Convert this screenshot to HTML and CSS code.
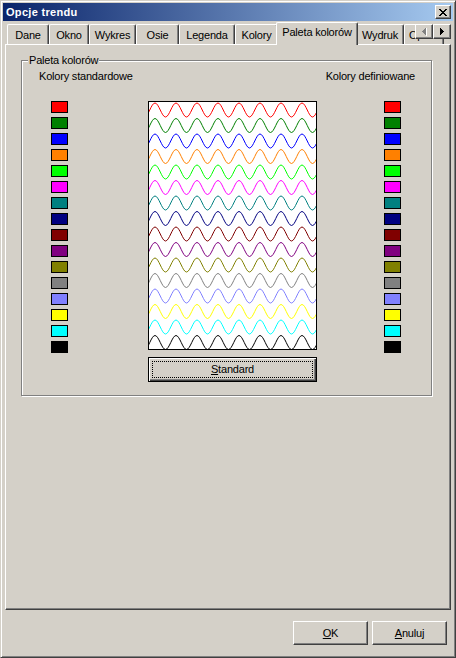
FILE: index.html
```html
<!DOCTYPE html>
<html lang="pl">
<head>
<meta charset="utf-8">
<title>Opcje trendu</title>
<link rel="stylesheet" href="styles.css">
</head>
<body>
<div class="window">
  <div class="titlebar">
    <span class="title">Opcje trendu</span>
    <button class="close" type="button" aria-label="Zamknij">
      <svg width="8" height="7" viewBox="0 0 8 7"><path d="M0 0h2v1h-2zM6 0h2v1h-2zM1 1h2v1h-2zM5 1h2v1h-2zM2 2h4v1h-4zM3 3h2v1h-2zM2 4h4v1h-4zM1 5h2v1h-2zM5 5h2v1h-2zM0 6h2v1h-2zM6 6h2v1h-2z" fill="#000"/></svg>
    </button>
  </div>

  <div class="tabctl">
    <div class="tabstrip">
      <div class="tab w-dane">Dane</div>
      <div class="tab w-okno">Okno</div>
      <div class="tab w-wykres">Wykres</div>
      <div class="tab w-osie">Osie</div>
      <div class="tab w-legenda">Legenda</div>
      <div class="tab w-kolory">Kolory</div>
      <div class="tab active w-paleta">Paleta kolorów</div>
      <div class="tab w-wydruk">Wydruk</div>
      <div class="tab partial">Opis</div>
    </div>
    <div class="spin">
      <button class="spinbtn" type="button" aria-label="W lewo">
        <svg width="5" height="8" viewBox="0 0 5 8"><path d="M4 0h1v8h-1zM3 1h1v6h-1zM2 2h1v4h-1zM1 3h1v2h-1z" fill="#fff"/><path d="M3 0h1v7h-1zM2 1h1v5h-1zM1 2h1v3h-1zM0 3h1v1h-1z" fill="#808080"/></svg>
      </button>
      <button class="spinbtn" type="button" aria-label="W prawo">
        <svg width="4" height="7" viewBox="0 0 4 7"><path d="M0 0h1v7h-1zM1 1h1v5h-1zM2 2h1v3h-1zM3 3h1v1h-1z" fill="#000"/></svg>
      </button>
    </div>

    <div class="panel">
      <div class="group">
        <span class="legend">Paleta kolorów</span>
        <div class="grp-head">
          <span>Kolory standardowe</span>
          <span>Kolory definiowane</span>
        </div>
        <div class="grp-body">
          <div class="swatches">
            <div class="sw c0"></div><div class="sw c1"></div><div class="sw c2"></div><div class="sw c3"></div>
            <div class="sw c4"></div><div class="sw c5"></div><div class="sw c6"></div><div class="sw c7"></div>
            <div class="sw c8"></div><div class="sw c9"></div><div class="sw c10"></div><div class="sw c11"></div>
            <div class="sw c12"></div><div class="sw c13"></div><div class="sw c14"></div><div class="sw c15"></div>
          </div>
          <div class="center">
            <div class="preview">
              <svg width="167" height="247" viewBox="0 0 167 247">
                <defs>
                  <path id="w" fill="none" stroke-width="1" d="M-4.5 14c3.816 0 6.684-14 10.5-14s6.684 14 10.5 14s6.684-14 10.5-14s6.684 14 10.5 14s6.684-14 10.5-14s6.684 14 10.5 14s6.684-14 10.5-14s6.684 14 10.5 14s6.684-14 10.5-14s6.684 14 10.5 14s6.684-14 10.5-14s6.684 14 10.5 14s6.684-14 10.5-14s6.684 14 10.5 14s6.684-14 10.5-14s6.684 14 10.5 14s6.684-14 10.5-14"/>
                </defs>
                <use href="#w" y="1" stroke="#FF0000"/>
                <use href="#w" y="16.5" stroke="#008000"/>
                <use href="#w" y="32" stroke="#0000FF"/>
                <use href="#w" y="47.5" stroke="#FF8000"/>
                <use href="#w" y="63" stroke="#00FF00"/>
                <use href="#w" y="78.5" stroke="#FF00FF"/>
                <use href="#w" y="94" stroke="#008080"/>
                <use href="#w" y="109.5" stroke="#000080"/>
                <use href="#w" y="125" stroke="#800000"/>
                <use href="#w" y="140.5" stroke="#800080"/>
                <use href="#w" y="156" stroke="#808000"/>
                <use href="#w" y="171.5" stroke="#808080"/>
                <use href="#w" y="187" stroke="#8080FF"/>
                <use href="#w" y="202.5" stroke="#FFFF00"/>
                <use href="#w" y="218" stroke="#00FFFF"/>
                <use href="#w" y="233.5" stroke="#000000"/>
              </svg>
            </div>
            <button class="btn default" type="button"><span class="focus"><u>S</u>tandard</span></button>
          </div>
          <div class="swatches right">
            <div class="sw c0"></div><div class="sw c1"></div><div class="sw c2"></div><div class="sw c3"></div>
            <div class="sw c4"></div><div class="sw c5"></div><div class="sw c6"></div><div class="sw c7"></div>
            <div class="sw c8"></div><div class="sw c9"></div><div class="sw c10"></div><div class="sw c11"></div>
            <div class="sw c12"></div><div class="sw c13"></div><div class="sw c14"></div><div class="sw c15"></div>
          </div>
        </div>
      </div>
    </div>
  </div>

  <div class="footer">
    <button class="btn" type="button"><u>O</u>K</button>
    <button class="btn" type="button"><u>A</u>nuluj</button>
  </div>
</div>
</body>
</html>
```

FILE: styles.css
```css
* {
  box-sizing: border-box;
}

html,
body {
  margin: 0;
  padding: 0;
}

body {
  width: 456px;
  height: 658px;
  overflow: hidden;
  background: #D4D0C8;
  font-family: "Liberation Sans", Arial, sans-serif;
  font-size: 11px;
  letter-spacing: -0.2px;
  color: #000;
}

button {
  font: inherit;
  letter-spacing: inherit;
  color: inherit;
  margin: 0;
  padding: 0;
  cursor: default;
}

.window {
  width: 456px;
  height: 658px;
  display: flex;
  flex-direction: column;
  background: #D4D0C8;
  border: 1px solid;
  border-color: #D4D0C8 #404040 #404040 #D4D0C8;
  box-shadow: inset 1px 1px #fff, inset -1px -1px #808080;
  padding: 2px;
}

/* ---------- title bar ---------- */
.titlebar {
  flex: none;
  height: 18px;
  display: flex;
  align-items: center;
  justify-content: space-between;
  padding: 0 2px 0 3px;
  background: linear-gradient(to right, #0A246A, #A6CAF0);
}

.title {
  color: #fff;
  font-weight: bold;
  letter-spacing: 0.3px;
  line-height: 13px;
}

.close {
  width: 16px;
  height: 14px;
  display: flex;
  align-items: center;
  justify-content: center;
  background: #D4D0C8;
  border: 1px solid;
  border-color: #fff #404040 #404040 #fff;
  box-shadow: inset -1px -1px #808080;
}

.close svg {
  display: block;
}

/* ---------- tab control ---------- */
.tabctl {
  flex: 1;
  display: flex;
  flex-direction: column;
  margin: 1px 2px 0 2px;
  position: relative;
}

.tabstrip {
  flex: none;
  height: 22px;
  display: flex;
  align-items: flex-end;
  padding-left: 2px;
  position: relative;
  z-index: 1;
}

.tab {
  flex: none;
  height: 20px;
  padding-top: 4px;
  line-height: 13px;
  text-align: center;
  white-space: nowrap;
  overflow: hidden;
  background: #D4D0C8;
  border-top: 1px solid #fff;
  border-left: 1px solid #fff;
  border-right: 1px solid #404040;
  border-radius: 2px 2px 0 0;
  box-shadow: inset -1px 0 #808080;
}

.w-dane { width: 42px; }
.w-okno { width: 40px; }
.w-wykres { width: 47px; }
.w-osie { width: 43px; }
.w-legenda { width: 56px; }
.w-kolory { width: 43px; }
.w-paleta { width: 82px; }
.w-wydruk { width: 48px; }

.tab.active {
  height: 23px;
  margin: 0 -2px -1px -2px;
  padding-top: 3px;
  position: relative;
  z-index: 2;
}

.tab.partial {
  width: 40px;
  text-align: left;
  padding-left: 4px;
}

.spin {
  position: absolute;
  top: 2px;
  right: 0;
  z-index: 3;
  display: flex;
}

.spinbtn {
  width: 18px;
  height: 15px;
  display: flex;
  align-items: center;
  justify-content: center;
  background: #D4D0C8;
  border: 1px solid;
  border-color: #fff #404040 #404040 #fff;
  box-shadow: inset -1px -1px #808080;
}

.spinbtn svg {
  display: block;
}

.panel {
  flex: 1;
  border: 1px solid;
  border-color: #fff #404040 #404040 #fff;
  box-shadow: inset -1px -1px #808080;
  padding: 15px 0 0 15px;
}

/* ---------- group box ---------- */
.group {
  position: relative;
  width: 411px;
  height: 336px;
  border: 1px solid #808080;
  box-shadow: inset 1px 1px #fff, 1px 1px #fff;
  padding-top: 9px;
}

.legend {
  position: absolute;
  top: -7px;
  left: 6px;
  padding: 0 1px;
  line-height: 13px;
  background: #D4D0C8;
}

.grp-head {
  display: flex;
  justify-content: space-between;
  padding: 0 16px 0 17px;
  line-height: 13px;
}

.grp-body {
  display: flex;
  align-items: flex-start;
  margin-top: 18px;
  padding-left: 29px;
}

.swatches {
  width: 17px;
  display: flex;
  flex-direction: column;
  gap: 4px;
}

.swatches.right {
  margin-left: 67px;
}

.sw {
  height: 12px;
  border: 1px solid #000;
}

.c0 { background: #FF0000; }
.c1 { background: #008000; }
.c2 { background: #0000FF; }
.c3 { background: #FF8000; }
.c4 { background: #00FF00; }
.c5 { background: #FF00FF; }
.c6 { background: #008080; }
.c7 { background: #000080; }
.c8 { background: #800000; }
.c9 { background: #800080; }
.c10 { background: #808000; }
.c11 { background: #808080; }
.c12 { background: #8080FF; }
.c13 { background: #FFFF00; }
.c14 { background: #00FFFF; }
.c15 { background: #000000; }

.center {
  width: 169px;
  margin-left: 80px;
  display: flex;
  flex-direction: column;
  gap: 7px;
}

.preview {
  height: 249px;
  border: 1px solid #000;
  background: #fff;
  overflow: hidden;
}

.preview svg {
  display: block;
}

/* ---------- buttons ---------- */
.btn {
  width: 75px;
  height: 24px;
  display: flex;
  align-items: center;
  justify-content: center;
  background: #D4D0C8;
  border: 1px solid;
  border-color: #fff #404040 #404040 #fff;
  box-shadow: inset -1px -1px #808080;
  line-height: 13px;
}

.btn.default {
  width: 169px;
  height: 25px;
  padding: 3px;
  border-color: #000;
  box-shadow: inset 1px 1px #fff, inset -1px -1px #404040, inset -2px -2px #808080;
}

.focus {
  flex: 1;
  align-self: stretch;
  display: flex;
  align-items: center;
  justify-content: center;
  border: 1px dotted #000;
}

.footer {
  flex: none;
  height: 45px;
  display: flex;
  justify-content: flex-end;
  gap: 4px;
  padding: 11px 6px 10px 0;
}
```
